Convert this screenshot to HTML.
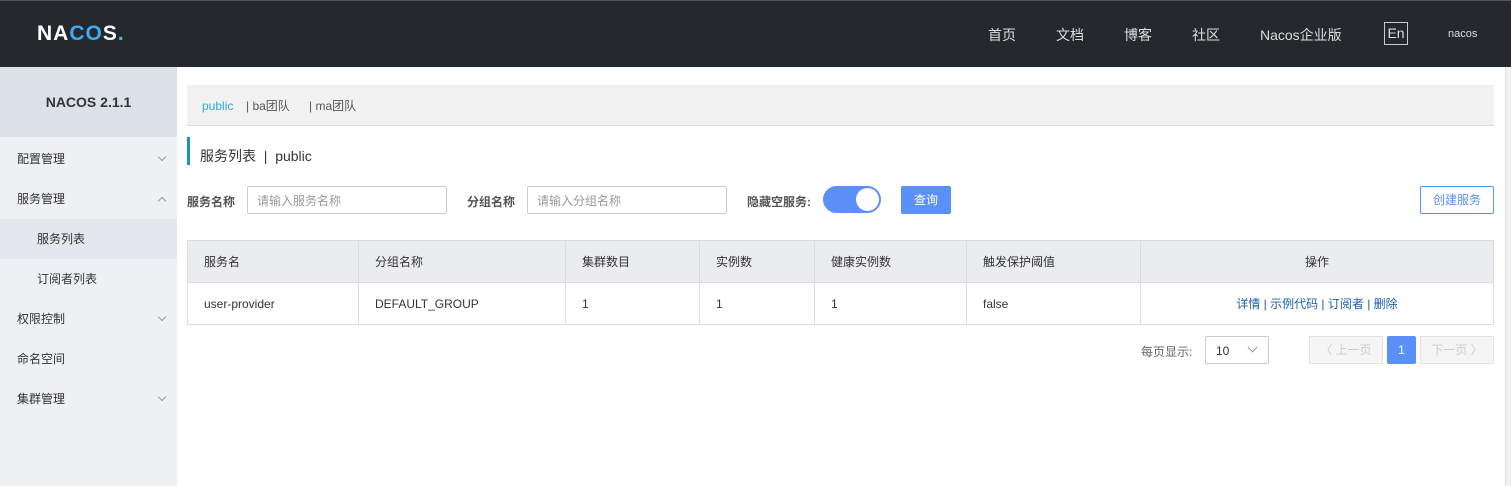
<!DOCTYPE html><html><head><meta charset="utf-8"><style>
*{box-sizing:border-box;margin:0;padding:0}
body{width:1511px;height:486px;overflow:hidden;font-family:"Liberation Sans","Noto Sans CJK SC",sans-serif;font-size:12px;color:#333;background:#fff;position:relative}
.a{position:absolute}
.hdr{left:0;top:0;width:1511px;height:67px;background:#25292e;border-top:1px solid #555}
.nav{color:#ddd;font-size:14px;top:25px}
.side{left:0;top:67px;width:177px;height:419px;background:#eef0f4}
.mi{left:0;width:177px;height:40px;line-height:40px;padding-left:17px;font-size:12px;color:#333}
.chev{position:absolute;right:12px;top:15px;width:6px;height:6px;border-right:1px solid #999;border-bottom:1px solid #999;transform:rotate(45deg)}
.up{transform:rotate(-135deg);top:19px}
input{position:absolute;height:28px;border:1px solid #ccc;border-radius:2px;padding-left:9px;font-size:12px;font-family:inherit;color:#999}
table{border-collapse:collapse;position:absolute;left:187px;top:240px;width:1307px}
td{border:1px solid #ddd;height:42px;padding-left:16px;font-size:12px}
tr:first-child td{background:#ebecf0;height:42px}
.sb{left:1505px;top:67px;width:6px;height:419px;background:#f0f0f0;border-left:1px solid #ddd}
.tab{top:98px;line-height:16px;color:#555}
</style></head><body>
<div class="a hdr"></div>
<div class="a" style="left:37px;top:22px;color:#fff;font-size:21px;font-weight:bold;letter-spacing:1px">NA<span style="color:#3fa9f5">CO</span>S<span style="color:#2cc">.</span></div>
<div class="a nav" style="left:988px">首页</div>
<div class="a nav" style="left:1056px">文档</div>
<div class="a nav" style="left:1124px">博客</div>
<div class="a nav" style="left:1192px">社区</div>
<div class="a nav" style="left:1260px">Nacos企业版</div>
<div class="a" style="left:1384px;top:22px;width:24px;height:23px;border:1px solid #ccc;color:#ddd;font-size:14px;text-align:center;line-height:21px">En</div>
<div class="a" style="left:1448px;top:28px;color:#ddd;font-size:11px">nacos</div>
<div class="a side"></div>
<div class="a" style="left:0;top:67px;width:177px;height:70px;background:#dce0e7;text-align:center;line-height:70px;font-weight:bold;font-size:14px;color:#333">NACOS 2.1.1</div>
<div class="a mi" style="top:139px">配置管理<i class="chev"></i></div>
<div class="a mi" style="top:179px">服务管理<i class="chev up"></i></div>
<div class="a mi" style="top:219px;padding-left:37px;background:#e4e7ed">服务列表</div>
<div class="a mi" style="top:259px;padding-left:37px">订阅者列表</div>
<div class="a mi" style="top:299px">权限控制<i class="chev"></i></div>
<div class="a mi" style="top:339px">命名空间</div>
<div class="a mi" style="top:379px">集群管理<i class="chev"></i></div>
<div class="sb a"></div>
<div class="a" style="left:187px;top:85px;width:1307px;height:41px;background:#f1f1f1;border-bottom:1px solid #ddd"></div>
<div class="a tab" style="left:202px;color:#2ea8d8">public</div>
<div class="a tab" style="left:246px">| ba团队</div>
<div class="a tab" style="left:309px">| ma团队</div>
<div class="a" style="left:187px;top:137px;width:3px;height:28px;background:#1e8fc7"></div>
<div class="a" style="left:200px;top:146px;font-size:14px;color:#333">服务列表 &nbsp;| &nbsp;public</div>
<div class="a" style="left:187px;top:193px;font-weight:bold;color:#555">服务名称</div>
<input style="left:247px;top:186px;width:200px" value="请输入服务名称">
<div class="a" style="left:467px;top:193px;font-weight:bold;color:#555">分组名称</div>
<input style="left:527px;top:186px;width:200px" value="请输入分组名称">
<div class="a" style="left:747px;top:193px;font-weight:bold;color:#555">隐藏空服务:</div>
<div class="a" style="left:823px;top:186px;width:58px;height:27px;border-radius:14px;background:#5b8ff9"></div>
<div class="a" style="left:856px;top:188px;width:23px;height:23px;border-radius:50%;background:#fff"></div>
<div class="a" style="left:901px;top:186px;width:50px;height:28px;border-radius:2px;background:#5b8ff9;color:#fff;text-align:center;line-height:28px">查询</div>
<div class="a" style="left:1420px;top:186px;width:74px;height:28px;border:1px solid #5b8ff9;border-radius:2px;color:#5b8ff9;text-align:center;line-height:26px">创建服务</div>
<table>
<tr><td style="width:171px">服务名</td><td style="width:207px">分组名称</td><td style="width:134px">集群数目</td><td style="width:115px">实例数</td><td style="width:152px">健康实例数</td><td style="width:174px">触发保护阈值</td><td style="text-align:center;padding:0">操作</td></tr>
<tr><td>user-provider</td><td>DEFAULT_GROUP</td><td>1</td><td>1</td><td>1</td><td>false</td><td style="text-align:center;padding:0;color:#1c5fa8">详情 | 示例代码 | 订阅者 | 删除</td></tr>
</table>
<div class="a" style="left:1141px;top:343px;color:#666">每页显示:</div>
<div class="a" style="left:1205px;top:336px;width:64px;height:28px;border:1px solid #ccc;border-radius:2px;padding:7px 0 0 10px">10<span style="position:absolute;right:12px;top:7px;width:7px;height:7px;border-right:1px solid #999;border-bottom:1px solid #999;transform:rotate(45deg)"></span></div>
<div class="a" style="left:1309px;top:336px;width:74px;height:28px;border:1px solid #e3e3e3;background:#f5f5f5;color:#ccc;text-align:center;line-height:26px">〈 上一页</div>
<div class="a" style="left:1387px;top:336px;width:29px;height:28px;background:#5b8ff9;color:#fff;text-align:center;line-height:28px;border-radius:2px">1</div>
<div class="a" style="left:1420px;top:336px;width:74px;height:28px;border:1px solid #e3e3e3;background:#f5f5f5;color:#ccc;text-align:center;line-height:26px">下一页 〉</div>
</body></html>
